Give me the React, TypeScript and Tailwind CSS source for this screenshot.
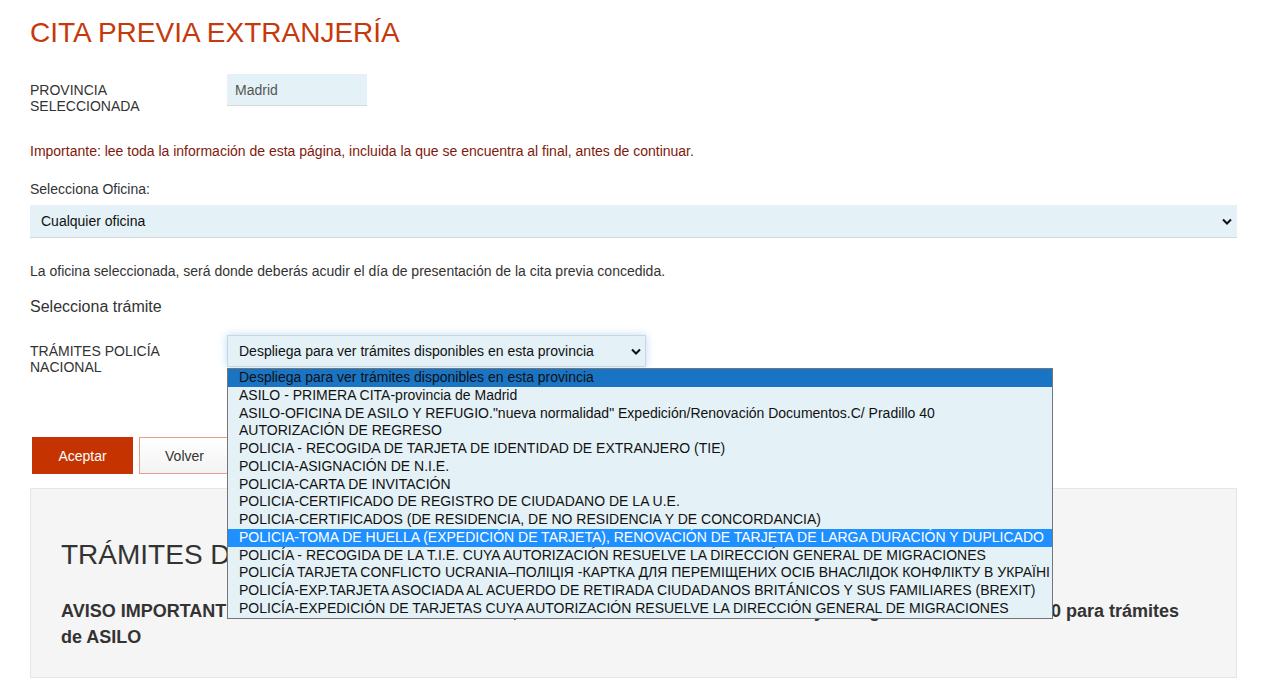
import React from 'react';

const tramites = [
  'Despliega para ver trámites disponibles en esta provincia',
  'ASILO - PRIMERA CITA-provincia de Madrid',
  'ASILO-OFICINA DE ASILO Y REFUGIO."nueva normalidad" Expedición/Renovación Documentos.C/ Pradillo 40',
  'AUTORIZACIÓN DE REGRESO',
  'POLICIA - RECOGIDA DE TARJETA DE IDENTIDAD DE EXTRANJERO (TIE)',
  'POLICIA-ASIGNACIÓN DE N.I.E.',
  'POLICIA-CARTA DE INVITACIÓN',
  'POLICIA-CERTIFICADO DE REGISTRO DE CIUDADANO DE LA U.E.',
  'POLICIA-CERTIFICADOS (DE RESIDENCIA, DE NO RESIDENCIA Y DE CONCORDANCIA)',
  'POLICIA-TOMA DE HUELLA (EXPEDICIÓN DE TARJETA), RENOVACIÓN DE TARJETA DE LARGA DURACIÓN Y DUPLICADO',
  'POLICÍA - RECOGIDA DE LA T.I.E. CUYA AUTORIZACIÓN RESUELVE LA DIRECCIÓN GENERAL DE MIGRACIONES',
  'POLICÍA TARJETA CONFLICTO UCRANIA–ПОЛІЦІЯ -КАРТКА ДЛЯ ПЕРЕМІЩЕНИХ ОСІБ ВНАСЛІДОК КОНФЛІКТУ В УКРАЇНІ',
  'POLICÍA-EXP.TARJETA ASOCIADA AL ACUERDO DE RETIRADA CIUDADANOS BRITÁNICOS Y SUS FAMILIARES (BREXIT)',
  'POLICÍA-EXPEDICIÓN DE TARJETAS CUYA AUTORIZACIÓN RESUELVE LA DIRECCIÓN GENERAL DE MIGRACIONES',
];

function Chevron() {
  return (
    <svg width="10" height="7" viewBox="0 0 10 7" className="shrink-0">
      <path d="M1 1.5 L5 5.5 L9 1.5" fill="none" stroke="#111" strokeWidth="2" />
    </svg>
  );
}

export default function App() {
  return (
    <div className="min-h-[695px] bg-white px-[30px] pt-[17px] text-[14px] leading-4 text-[#333]" style={{ fontFamily: '"Liberation Sans", Arial, sans-serif' }}>
      <h1 className="text-[28px] leading-8 text-[#c53a0c]">CITA PREVIA EXTRANJERÍA</h1>

      {/* Provincia */}
      <div className="mt-[25px] flex">
        <div className="w-[197px] pt-2">PROVINCIA<br />SELECCIONADA</div>
        <div className="flex h-8 w-[140px] items-center border-b border-[#d4d9dc] bg-[#e4f1f6] px-2 text-[#555]">Madrid</div>
      </div>

      <p className="mt-[29px] text-[#7e1a0c]">Importante: lee toda la información de esta página, incluida la que se encuentra al final, antes de continuar.</p>

      <p className="mt-[22px]">Selecciona Oficina:</p>
      <div className="mt-2 flex h-[33px] items-center justify-between border-b border-[#d4d9dc] bg-[#e4f1f6] pl-[11px] pr-[5px] text-[#111]">
        <span>Cualquier oficina</span>
        <Chevron />
      </div>

      <p className="mt-[25px]">La oficina seleccionada, será donde deberás acudir el día de presentación de la cita previa concedida.</p>
      <p className="mt-[19px] text-[16px] leading-[18px]">Selecciona trámite</p>

      {/* Tramites */}
      <div className="mt-[19px] flex">
        <div className="w-[197px] pt-2">TRÁMITES POLICÍA<br />NACIONAL</div>
        <div className="relative">
          <div className="flex h-8 w-[419px] items-center justify-between border border-[#c9d6dc] bg-[#e4f1f6] pl-[11px] pr-[4px] text-[#111] shadow-[0_0_8px_rgba(102,175,233,0.45)]">
            <span>Despliega para ver trámites disponibles en esta provincia</span>
            <Chevron />
          </div>
          <ul className="absolute left-0 top-[33px] z-10 w-[826px] border border-[#767676] bg-[#e4f1f6] text-[#111]">
            {tramites.map((t, i) => (
              <li
                key={i}
                className={
                  'h-[17.75px] whitespace-nowrap px-[11px] leading-[17.75px] ' +
                  (i === 0 ? 'bg-[#1a74c4]' : i === 9 ? 'bg-[#1e90ff] text-white' : '')
                }
              >
                {t}
              </li>
            ))}
          </ul>
        </div>
      </div>

      {/* Botones */}
      <div className="mt-[62px] flex gap-[6px] pl-[2px]">
        <button className="h-[37px] w-[101px] bg-[#c43300] text-white">Aceptar</button>
        <button className="h-[37px] w-[91px] border border-[#e3a18c] bg-gradient-to-b from-white to-[#f3f3f3] text-[#333]">Volver</button>
      </div>

      {/* Info box */}
      <div className="mt-[14px] h-[190px] border border-[#e6e6e6] bg-[#f5f5f5] px-[30px] pt-[50px]">
        <h2 className="text-[28px] leading-8 text-[#333]">TRÁMITES DE ASILO Y PROTECCIÓN INTERNACIONAL</h2>
        <p className="mt-[27px] text-[18px] font-bold leading-[26px] text-[#333]">
          <span className="whitespace-nowrap">AVISO IMPORTANTE: si deseas solicitar cita de asilo, debes acudir a la Oficina de Asilo y Refugio en la C/ Pradillo 40 para trámites</span>
          <br />
          de ASILO
        </p>
      </div>
    </div>
  );
}
